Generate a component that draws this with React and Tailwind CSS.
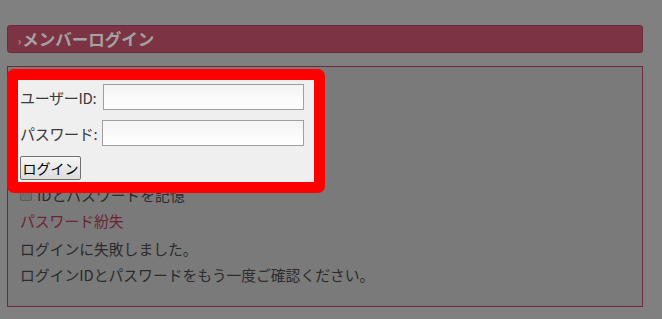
export default function App() {
  const font = { fontFamily: '"Noto Sans CJK JP", "Noto Sans", sans-serif' };
  return (
    <div className="w-[662px] h-[319px] overflow-hidden bg-[#808080] pt-[25px] pl-[7px] pr-[19px]" style={font}>
      {/* title bar */}
      <div className="h-[28px] rounded-[3px] border border-[#6d2a3a] bg-[#7c3444] flex items-center pl-[10px] text-[16.5px] font-bold text-[#a3a3a3] leading-none">
        <span className="text-[10px] mr-[1px] mt-[4px]">›</span>
        <span>メンバーログイン</span>
      </div>

      {/* content box */}
      <div className="mt-[13px] h-[241px] border border-[#6e2a3c] bg-[#7a7a7a]">
        {/* highlighted form */}
        <div className="relative z-10 mt-[2px] -ml-px w-[318px] border-[11px] border-[#ff0000] rounded-[7px] bg-[#efefef] pt-[4px] pb-[2px] pl-[2px] -mb-[10px] text-[15px] text-[#3a3a3a]">
          <div className="flex items-center h-[26px]">
            <span className="w-[83px] leading-none tracking-[-0.3px]">ユーザーID:</span>
            <input className="w-[201px] h-[26px] border border-[#a0a0a0] bg-gradient-to-b from-[#f4f4f4] to-white outline-none" />
          </div>
          <div className="flex items-center h-[26px] mt-[10px]">
            <span className="w-[82px] leading-none tracking-[-0.3px]">パスワード:</span>
            <input type="password" className="w-[202px] h-[26px] border border-[#a0a0a0] bg-gradient-to-b from-[#f4f4f4] to-white outline-none" />
          </div>
          <button className="mt-[10px] h-[24px] w-[61px] border border-[#707070] rounded-[2px] bg-gradient-to-b from-[#f6f6f6] to-[#dcdcdc] text-[14px] text-black leading-none">
            ログイン
          </button>
        </div>

        <div className="pl-[12px] text-[14.8px] text-[#2b2b2b]">
          <div className="flex items-center h-[24px] gap-[5px]">
            <span className="w-[12px] h-[12px] rounded-[2px] border border-[#5e5e5e] bg-[#6f6f6f]" />
            <span>IDとパスワードを記憶</span>
          </div>
          <div className="mt-[2px] h-[24px] flex items-center text-[#6a2434]">パスワード紛失</div>
          <div className="mt-[3px] leading-[26px]">
            <div>ログインに失敗しました。</div>
            <div>ログインIDとパスワードをもう一度ご確認ください。</div>
          </div>
        </div>
      </div>
    </div>
  );
}
